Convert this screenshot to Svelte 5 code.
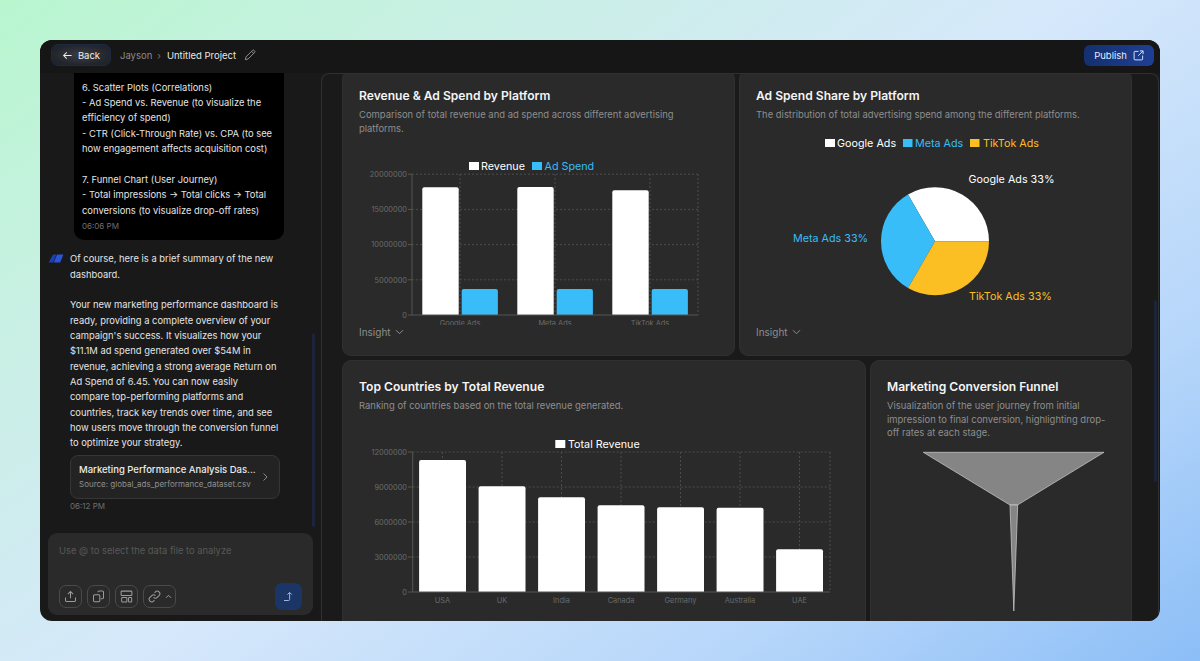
<script>
  const platforms = [
    { name: 'Google Ads', x: 460, rev: 187.3, spend: 289 },
    { name: 'Meta Ads', x: 555, rev: 187, spend: 289 },
    { name: 'TikTok Ads', x: 650, rev: 190.3, spend: 289 }
  ];
  const ticks1 = ['0', '5000000', '10000000', '15000000', '20000000'];
  const ticks3 = ['0', '3000000', '6000000', '9000000', '12000000'];
  const countries = [
    { name: 'USA', top: 460 },
    { name: 'UK', top: 486.3 },
    { name: 'India', top: 497.3 },
    { name: 'Canada', top: 505.3 },
    { name: 'Germany', top: 507.3 },
    { name: 'Australia', top: 507.7 },
    { name: 'UAE', top: 549.3 }
  ];
  const step = 59.5;

  const pieX = 935;
  const pieY = 241.3;
  const pieR = 54;
  // angle in degrees, counter clockwise from the right
  function slice(a, b) {
    const p = (d) => {
      const r = (d * Math.PI) / 180;
      return `${(pieX + pieR * Math.cos(r)).toFixed(2)} ${(pieY - pieR * Math.sin(r)).toFixed(2)}`;
    };
    return `M${pieX} ${pieY} L${p(a)} A${pieR} ${pieR} 0 0 0 ${p(b)} Z`;
  }
</script>

<div class="page">
  <div class="window">
    <header class="topbar">
      <button class="back">
        <svg width="11" height="11" viewBox="0 0 12 12" fill="none" stroke="currentColor" stroke-width="1.1"><path d="M10.5 6H1.8M5.2 2.5 1.8 6l3.4 3.5" /></svg>
        Back
      </button>
      <span class="crumb">Jayson</span>
      <span class="crumb-sep">›</span>
      <span class="project">Untitled Project</span>
      <svg class="pencil" width="12" height="12" viewBox="0 0 12 12" fill="none" stroke="#9a9a9a" stroke-width=".9"><path d="M1.3 10.7 2 7.9 8.6 1.3a1 1 0 0 1 1.4 0l.7.7a1 1 0 0 1 0 1.4L4.1 10z M7.6 2.3l2.1 2.1" /></svg>
      <button class="publish">
        Publish
        <svg width="11" height="11" viewBox="0 0 12 12" fill="none" stroke="currentColor" stroke-width="1"><path d="M6 1.5H2.2a1 1 0 0 0-1 1v7.3a1 1 0 0 0 1 1h7.3a1 1 0 0 0 1-1V6M7.5 1h3.5v3.5M11 1 5.7 6.3" /></svg>
      </button>
    </header>

    <div class="workspace">
      <aside class="chat">
        <div class="messages">
          <div class="bubble">
            <p>6. Scatter Plots (Correlations)</p>
            <p>- Ad Spend vs. Revenue (to visualize the efficiency of spend)</p>
            <p>- CTR (Click-Through Rate) vs. CPA (to see how engagement affects acquisition cost)</p>
            <p class="blank">&nbsp;</p>
            <p>7. Funnel Chart (User Journey)</p>
            <p>- Total impressions → Total clicks → Total conversions (to visualize drop-off rates)</p>
            <div class="time">06:06 PM</div>
          </div>

          <div class="reply">
            <svg class="avatar" width="16" height="9" viewBox="0 0 16 9"><path d="M5 .6h3.4L5.2 8.4H.6z" fill="#1d3fb0" /><path d="M9 .6h6.4l-3.2 7.8H5.8z" fill="#2a55d6" /></svg>
            <div class="reply-body">
              <p class="reply-text">Of course, here is a brief summary of the new dashboard.</p>
              <p class="blank">&nbsp;</p>
              <p class="reply-text">Your new marketing performance dashboard is ready, providing a complete overview of your campaign's success. It visualizes how your $11.1M ad spend generated over $54M in revenue, achieving a strong average Return on Ad Spend of 6.45. You can now easily compare top-performing platforms and countries, track key trends over time, and see how users move through the conversion funnel to optimize your strategy.</p>
              <div class="file">
                <div class="file-text">
                  <div class="file-name">Marketing Performance Analysis Das...</div>
                  <div class="file-src">Source: global_ads_performance_dataset.csv</div>
                </div>
                <svg width="8" height="10" viewBox="0 0 8 10" fill="none" stroke="#8a8a8a" stroke-width="1"><path d="m2.5 1.5 3.5 3.5-3.5 3.5" /></svg>
              </div>
              <div class="time">06:12 PM</div>
            </div>
          </div>
        </div>

        <div class="composer">
          <div class="placeholder">Use @ to select the data file to analyze</div>
          <div class="tools">
            <button class="tool" aria-label="Upload">
              <svg width="13" height="13" viewBox="0 0 14 14" fill="none" stroke="currentColor" stroke-width="1.1"><path d="M7 9V1.8M4.2 4.4 7 1.6l2.8 2.8M1.6 8.2v3a1.2 1.2 0 0 0 1.2 1.2h8.4a1.2 1.2 0 0 0 1.2-1.2v-3" /></svg>
            </button>
            <button class="tool" aria-label="Files">
              <svg width="13" height="13" viewBox="0 0 14 14" fill="none" stroke="currentColor" stroke-width="1.1"><path d="M6 2.2 7.6 1h3.6a1.2 1.2 0 0 1 1.2 1.2v6a1.2 1.2 0 0 1-1.2 1.2H9.6M2.8 5.2h4.4a1.2 1.2 0 0 1 1.2 1.2v5a1.2 1.2 0 0 1-1.2 1.2H2.8a1.2 1.2 0 0 1-1.2-1.2v-5a1.2 1.2 0 0 1 1.2-1.2z" /></svg>
            </button>
            <button class="tool" aria-label="Layout">
              <svg width="13" height="13" viewBox="0 0 14 14" fill="none" stroke="currentColor" stroke-width="1.1"><rect x="1.2" y="1.2" width="11.6" height="4.8" rx=".8" /><rect x="1.8" y="8" width="5.6" height="4.8" rx=".8" /><rect x="9.2" y="8" width="3.4" height="4.8" rx=".8" /></svg>
            </button>
            <button class="tool wide" aria-label="Link">
              <svg width="13" height="13" viewBox="0 0 14 14" fill="none" stroke="currentColor" stroke-width="1.1"><path d="M6 8a2.7 2.7 0 0 0 3.9 0l2-2A2.75 2.75 0 0 0 8 2.1l-.9.9M8 6a2.7 2.7 0 0 0-3.9 0l-2 2A2.75 2.75 0 0 0 6 11.9l.9-.9" /></svg>
              <svg width="7" height="5" viewBox="0 0 7 5" fill="none" stroke="currentColor" stroke-width="1"><path d="m1 3.8 2.5-2.5L6 3.8" /></svg>
            </button>
            <button class="send" aria-label="Send">
              <svg width="12" height="12" viewBox="0 0 12 12" fill="none" stroke="#9fb2d8" stroke-width="1"><path d="M1 9.5h4.6a1 1 0 0 0 1-1V1.6M4.4 3.6l2.2-2.2 2.2 2.2" /></svg>
            </button>
          </div>
        </div>
        <div class="chat-scrollbar"></div>
      </aside>

      <main class="preview">
        <div class="sheet">
          <div class="row even">
            <section class="card">
              <div class="head">
                <h2>Revenue &amp; Ad Spend by Platform</h2>
                <p>Comparison of total revenue and ad spend across different advertising platforms.</p>
              </div>
              <svg class="chart" width="359" height="190" viewBox="359 135 359 190">
                <rect x="469" y="162" width="10" height="8" fill="#fff" />
                <text x="481" y="170" class="legend" fill="#fff">Revenue</text>
                <rect x="532" y="162" width="10" height="8" fill="#38bdf8" />
                <text x="544.5" y="170" class="legend" fill="#38bdf8">Ad Spend</text>

                {#each ticks1 as t, i}
                  <line x1="408" x2="412" y1={315 - i * 35.2} y2={315 - i * 35.2} class="axis" />
                  {#if i > 0}
                    <line x1="412" x2="698" y1={315 - i * 35.2} y2={315 - i * 35.2} class="grid" />
                  {/if}
                  <text x="407" y={317.7 - i * 35.2} class="tick" text-anchor="end">{t}</text>
                {/each}
                {#each platforms as p}
                  <line x1={p.x} x2={p.x} y1="174" y2="315" class="grid" />
                {/each}
                <line x1="698" x2="698" y1="174" y2="315" class="grid" />
                {#each platforms as p}
                  <path d="M{p.x - 37.7} 315V{p.rev + 2}q0-2 2-2h32.4q2 0 2 2V315z" fill="#fff" />
                  <path d="M{p.x + 1.7} 315V{p.spend + 2}q0-2 2-2h32.2q2 0 2 2V315z" fill="#38bdf8" />
                  <text x={p.x} y="326" class="tick" text-anchor="middle">{p.name}</text>
                {/each}
                <line x1="412" x2="412" y1="174" y2="315" class="axis" />
                <line x1="412" x2="698" y1="315" y2="315" class="axis" />
              </svg>
              <div class="insight">Insight
                <svg width="9" height="6" viewBox="0 0 9 6" fill="none" stroke="currentColor" stroke-width="1"><path d="m1 1.2 3.5 3.5L8 1.2" /></svg>
              </div>
            </section>

            <section class="card">
              <div class="head">
                <h2>Ad Spend Share by Platform</h2>
                <p>The distribution of total advertising spend among the different platforms.</p>
              </div>
              <svg class="chart" width="359" height="190" viewBox="756 135 359 190">
                <rect x="825" y="139" width="10" height="8" fill="#fff" />
                <text x="837" y="147" class="legend" fill="#fff">Google Ads</text>
                <rect x="903" y="139" width="9.5" height="8" fill="#38bdf8" />
                <text x="915" y="147" class="legend" fill="#38bdf8">Meta Ads</text>
                <rect x="970" y="139" width="9.5" height="8" fill="#fbbf24" />
                <text x="983" y="147" class="legend" fill="#fbbf24">TikTok Ads</text>

                <path d={slice(0, 120)} fill="#fff" />
                <path d={slice(120, 240)} fill="#38bdf8" />
                <path d={slice(240, 360)} fill="#fbbf24" />

                <text x="968.5" y="183" class="legend" fill="#fff">Google Ads 33%</text>
                <text x="793" y="242.3" class="legend" fill="#38bdf8">Meta Ads 33%</text>
                <text x="969" y="299.5" class="legend" fill="#fbbf24">TikTok Ads 33%</text>
              </svg>
              <div class="insight">Insight
                <svg width="9" height="6" viewBox="0 0 9 6" fill="none" stroke="currentColor" stroke-width="1"><path d="m1 1.2 3.5 3.5L8 1.2" /></svg>
              </div>
            </section>
          </div>

          <div class="row wide-narrow">
            <section class="card">
              <div class="head tall">
                <h2>Top Countries by Total Revenue</h2>
                <p>Ranking of countries based on the total revenue generated.</p>
              </div>
              <svg class="chart" width="490" height="180" viewBox="359 438 490 180">
                <rect x="555.3" y="440" width="10" height="8" fill="#fff" />
                <text x="568" y="447.8" class="legend" fill="#fff">Total Revenue</text>

                {#each ticks3 as t, i}
                  <line x1="408" x2="412.7" y1={592 - i * 35} y2={592 - i * 35} class="axis" />
                  {#if i > 0}
                    <line x1="412.7" x2="830" y1={592 - i * 35} y2={592 - i * 35} class="grid" />
                  {/if}
                  <text x="407" y={594.7 - i * 35} class="tick" text-anchor="end">{t}</text>
                {/each}
                {#each countries as c, i}
                  <line x1={442.5 + i * step} x2={442.5 + i * step} y1="452" y2="592" class="grid" />
                {/each}
                <line x1="830" x2="830" y1="452" y2="592" class="grid" />
                {#each countries as c, i}
                  <path d="M{419.1 + i * step} 592V{c.top + 2}q0-2 2-2h42.9q2 0 2 2V592z" fill="#fff" />
                  <text x={442.5 + i * step} y="603" class="tick" text-anchor="middle">{c.name}</text>
                {/each}
                <line x1="412.7" x2="412.7" y1="452" y2="592" class="axis" />
                <line x1="412.7" x2="830" y1="592" y2="592" class="axis" />
              </svg>
              <div class="insight">Insight</div>
            </section>

            <section class="card">
              <div class="head tall">
                <h2>Marketing Conversion Funnel</h2>
                <p>Visualization of the user journey from initial impression to final conversion, highlighting drop-off rates at each stage.</p>
              </div>
              <svg class="chart" width="227" height="180" viewBox="887 438 227 180">
                <polygon points="923.3,452.3 1104,452.3 1017.5,505 1010,505" fill="#858585" stroke="#d0d0d0" stroke-width=".7" />
                <polygon points="1010,505 1017.7,505 1013.8,611" fill="#858585" stroke="#d0d0d0" stroke-width=".7" />
              </svg>
              <div class="insight">Insight</div>
            </section>
          </div>
        </div>
        <div class="preview-scrollbar"></div>
      </main>
    </div>
  </div>
</div>

<style>
  :global(body) {
    margin: 0;
    background: linear-gradient(145deg, #b8f6cf 0%, #c9f0e4 22%, #d6e8fb 50%, #b6d6fa 78%, #8cbef7 100%);
    font-family: Inter, 'Noto Sans', sans-serif;
  }

  * {
    box-sizing: border-box;
  }

  p {
    margin: 0;
  }

  button {
    font-family: inherit;
    cursor: pointer;
  }

  .page {
    height: 661px;
    padding: 40px;
    overflow: hidden;
  }

  .window {
    height: 581px;
    display: flex;
    flex-direction: column;
    background: #191919;
    border-radius: 12px;
    overflow: hidden;
  }

  .topbar {
    height: 33px;
    flex: none;
    display: flex;
    align-items: center;
    padding: 0 6px 3px 11px;
    background: #161616;
    font-size: 9.5px;
  }

  .back {
    width: 60px;
    height: 22px;
    display: flex;
    align-items: center;
    justify-content: center;
    gap: 5px;
    color: #eee;
    font-size: 9.5px;
    border: 1px solid #1c2a44;
    border-radius: 7px;
    background: radial-gradient(ellipse at center, #3a3d42 0%, #22262c 70%, #1a2130 100%);
  }

  .crumb {
    margin-left: 9px;
    color: #8a8a8a;
  }

  .crumb-sep {
    margin: 0 6px 0 5px;
    color: #777;
  }

  .project {
    color: #e8e8e8;
  }

  .pencil {
    margin-left: 8px;
  }

  .publish {
    margin-left: auto;
    width: 70px;
    height: 21px;
    display: flex;
    align-items: center;
    justify-content: center;
    gap: 6px;
    color: #e6ecf8;
    font-size: 9.5px;
    border: none;
    border-radius: 6px;
    background: linear-gradient(90deg, #14306f, #1f3f94);
  }

  .workspace {
    flex: 1;
    min-height: 0;
    display: flex;
  }

  .chat {
    position: relative;
    width: 281px;
    flex: none;
    display: flex;
    flex-direction: column;
    padding: 0 8px 6px;
    font-size: 9.4px;
    line-height: 15.35px;
    color: #e4e4e4;
  }

  .messages {
    flex: 1;
    min-height: 0;
    display: flex;
    flex-direction: column;
    justify-content: flex-end;
    overflow: hidden;
    padding-bottom: 19px;
  }

  .bubble {
    flex: none;
    width: 210px;
    margin-left: 26px;
    padding: 30px 8px 6px;
    background: #000;
    border-radius: 10px;
  }

  .time {
    margin-top: 1px;
    font-size: 8px;
    color: #6f6f6f;
  }

  .reply {
    flex: none;
    display: flex;
    margin-top: 11px;
  }

  .avatar {
    flex: none;
    margin-top: 3px;
    margin-right: 6px;
  }

  .reply-body {
    width: 210px;
  }

  .reply-text {
    width: 209px;
  }

  .file {
    display: flex;
    align-items: center;
    justify-content: space-between;
    height: 44px;
    margin-top: 4px;
    padding: 0 10px 0 8px;
    background: #232323;
    border: 1px solid #363636;
    border-radius: 8px;
  }

  .file-name {
    font-size: 9.5px;
    font-weight: 500;
    line-height: 14px;
    color: #ececec;
    white-space: nowrap;
  }

  .file-src {
    font-size: 8px;
    line-height: 12px;
    margin-top: 1px;
    color: #909090;
    white-space: nowrap;
  }

  .file + .time {
    margin-top: 0;
  }

  .composer {
    flex: none;
    height: 82px;
    width: 265px;
    display: flex;
    flex-direction: column;
    justify-content: space-between;
    padding: 10px 11px 5px;
    background: #2a2a2a;
    border-radius: 9px;
  }

  .placeholder {
    font-size: 9.4px;
    color: #585858;
  }

  .tools {
    display: flex;
    align-items: center;
    gap: 5px;
  }

  .tool {
    width: 23px;
    height: 23px;
    display: flex;
    align-items: center;
    justify-content: center;
    gap: 4px;
    padding: 0;
    color: #9c9c9c;
    background: transparent;
    border: 1px solid #4a4a4a;
    border-radius: 7px;
  }

  .tool.wide {
    width: 33px;
  }

  .send {
    width: 27px;
    height: 27px;
    margin-left: auto;
    display: flex;
    align-items: center;
    justify-content: center;
    padding: 0;
    background: #1b3566;
    border: none;
    border-radius: 7px;
  }

  .chat-scrollbar {
    position: absolute;
    right: 6px;
    top: 260px;
    width: 3px;
    height: 194px;
    background: #1b2438;
    border-radius: 2px;
  }

  .preview {
    position: relative;
    flex: 1;
    min-width: 0;
    margin-right: 1px;
    padding: 0 26px 0 20px;
    background: #1a1a1a;
    border: 1px solid #303030;
    border-bottom: none;
    border-radius: 8px 8px 0 0;
    overflow: hidden;
  }

  .sheet {
    margin-top: -4px;
    display: flex;
    flex-direction: column;
    gap: 4px;
  }

  .row {
    display: grid;
    gap: 4px;
  }

  .row.even {
    grid-template-columns: 1fr 1fr;
  }

  .row.wide-narrow {
    grid-template-columns: 2fr 1fr;
  }

  .card {
    padding: 17px 16px;
    background: #2a2a2a;
    border: 1px solid #303030;
    border-radius: 9px;
    height: 286px;
    overflow: hidden;
  }

  .row.wide-narrow .card {
    height: 300px;
    padding-top: 18px;
  }

  .head {
    height: 47px;
  }

  .head.tall {
    height: 59px;
  }

  h2 {
    margin: 0 0 4px;
    font-size: 12.1px;
    line-height: 16px;
    font-weight: 600;
    color: #f5f5f5;
  }

  .head p {
    font-size: 9.45px;
    line-height: 13.5px;
    color: #8e8e8e;
  }

  .chart {
    display: block;
  }

  .legend {
    font-size: 10.75px;
  }

  .tick {
    font-size: 7.4px;
    fill: #6b6b6b;
  }

  .grid {
    stroke: #4c4c4c;
    stroke-width: 1;
    stroke-dasharray: 2 2;
  }

  .axis {
    stroke: #555;
    stroke-width: 1;
  }

  .insight {
    display: flex;
    align-items: center;
    gap: 4px;
    height: 14px;
    font-size: 10px;
    color: #8e8e8e;
  }

  .preview-scrollbar {
    position: absolute;
    right: 1px;
    top: 226px;
    width: 3px;
    height: 182px;
    background: #1b2438;
    border-radius: 2px;
  }
</style>
